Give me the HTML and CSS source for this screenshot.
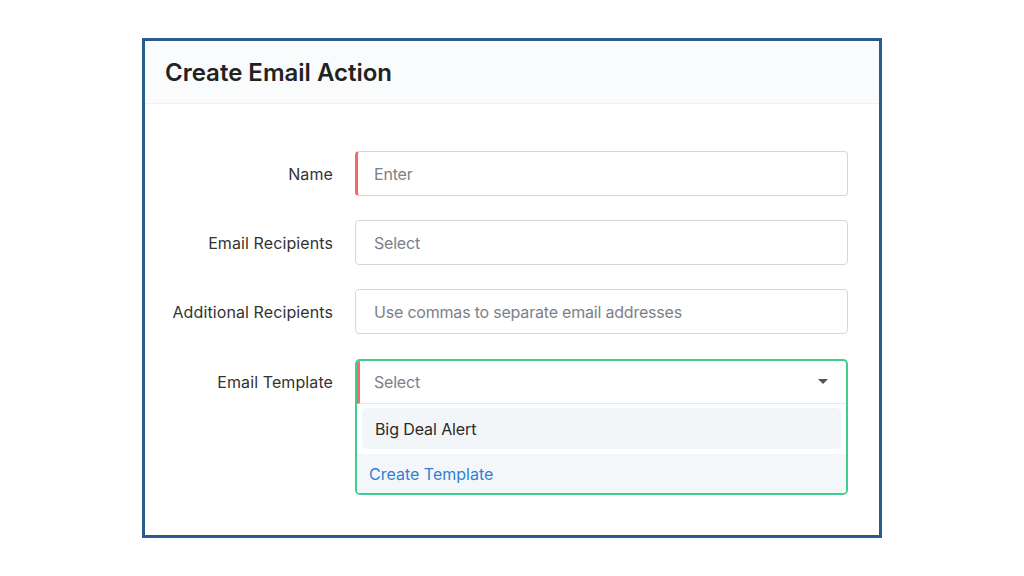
FILE: index.html
```html
<!DOCTYPE html>
<html>
<head>
<meta charset="utf-8">
<link rel="stylesheet" href="styles.css">
</head>
<body>
<div class="frame">
  <div class="header"><h1 class="title">Create Email Action</h1></div>
  <div class="form">
    <div class="row">
      <label class="label">Name</label>
      <div class="field required"><span class="ph">Enter</span></div>
    </div>
    <div class="row">
      <label class="label">Email Recipients</label>
      <div class="field"><span class="ph">Select</span></div>
    </div>
    <div class="row">
      <label class="label">Additional Recipients</label>
      <div class="field"><span class="ph">Use commas to separate email addresses</span></div>
    </div>
    <div class="row row-top">
      <label class="label label-pad">Email Template</label>
      <div class="combo">
        <div class="combo-head"><span class="ph">Select</span>
          <svg class="caret" width="10" height="6" viewBox="0 0 10 6"><path d="M0 0H10L5 5Z" fill="#555"/></svg>
        </div>
        <div class="list">
          <div class="opt">Big Deal Alert</div>
          <div class="create">Create Template</div>
        </div>
      </div>
    </div>
  </div>
</div>
</body>
</html>
```
FILE: styles.css
```css
* { box-sizing: border-box; }
html, body { margin: 0; background: #fff; }
body { font-family: Inter, "Noto Sans", sans-serif; padding-top: 38px; }
.frame {
  margin-left: 142px;
  width: 740px;
  height: 500px;
  border: 3px solid #2b5a8e;
  background: #fff;
}
.header {
  height: 63px;
  background: #fafbfc;
  border-bottom: 1px solid #eef0f3;
  padding-left: 20px;
  display: flex;
  align-items: center;
}
.title {
  margin: 0;
  font-size: 24px;
  font-weight: 600;
  color: #222;
  letter-spacing: 0;
}
.form { padding-top: 47px; display: flex; flex-direction: column; gap: 24px; }
.row { display: flex; align-items: center; gap: 22px; }
.row-top { align-items: flex-start; margin-top: 1px; }
.label {
  width: 188px;
  text-align: right;
  font-size: 16px;
  color: #333;
  letter-spacing: 0.1px;
}
.label-pad { padding-top: 13px; }
.field {
  width: 493px;
  height: 45px;
  border: 1px solid #d3d7de;
  border-radius: 4px;
  display: flex;
  align-items: center;
  padding-left: 18px;
}
.field.required { border-left: 3px solid #f26b6b; padding-left: 16px; }
.ph { font-size: 16px; color: #7d8088; letter-spacing: -0.2px; }
.combo {
  width: 493px;
  border: 2px solid #3ecf8e;
  border-radius: 5px;
  overflow: hidden;
}
.combo-head {
  height: 43px;
  border-left: 3px solid #f26b6b;
  border-bottom: 1px solid #e6e9ee;
  display: flex;
  align-items: center;
  justify-content: space-between;
  padding-left: 14px;
  padding-right: 18px;
}
.list { padding: 4px 5px 0 5px; background: #fff; }
.opt {
  height: 41px;
  background: #f3f6f9;
  border-radius: 5px;
  display: flex;
  align-items: center;
  padding-left: 13px;
  font-size: 16px;
  color: #2a2a2a;
  letter-spacing: -0.1px;
}
.create {
  margin: 5px -5px 0 -5px;
  height: 39px;
  background: #f4f7fa;
  display: flex;
  align-items: center;
  padding-left: 12px;
  font-size: 16px;
  color: #2f7fd6;
  letter-spacing: 0;
}
```
